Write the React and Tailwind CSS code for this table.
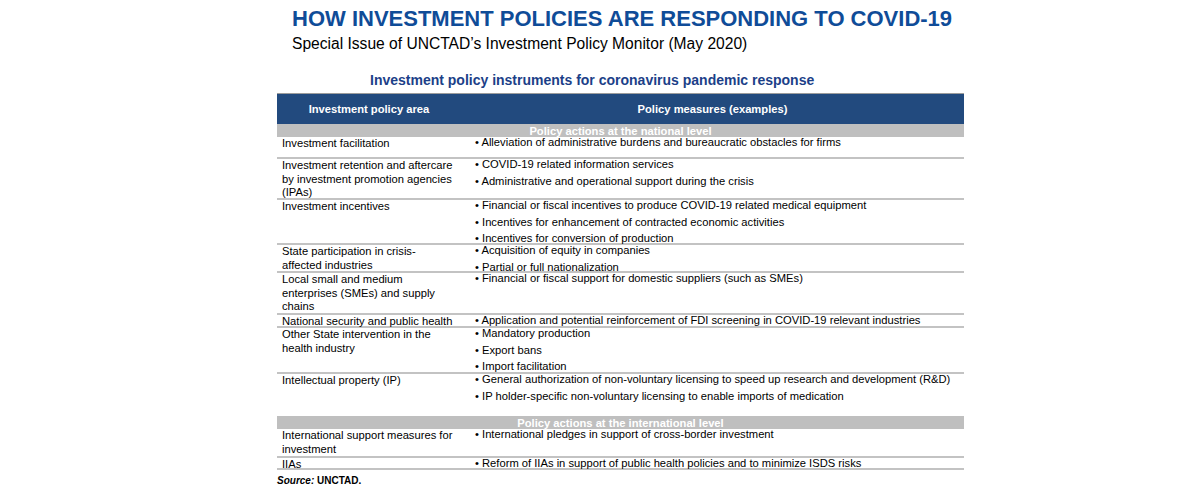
import React from 'react';

const national = [
  { area: ['Investment facilitation'], items: ['Alleviation of administrative burdens and bureaucratic obstacles for firms'], h: 'h-[22px]' },
  { area: ['Investment retention and aftercare', 'by investment promotion agencies', '(IPAs)'], items: ['COVID-19 related information services', 'Administrative and operational support during the crisis'], h: 'h-[41px]' },
  { area: ['Investment incentives'], items: ['Financial or fiscal incentives to produce COVID-19 related medical equipment', 'Incentives for enhancement of contracted economic activities', 'Incentives for conversion of production'], h: 'h-[45px]' },
  { area: ['State participation in crisis-', 'affected industries'], items: ['Acquisition of equity in companies', 'Partial or full nationalization'], h: 'h-[28px]' },
  { area: ['Local small and medium', 'enterprises (SMEs) and supply', 'chains'], items: ['Financial or fiscal support for domestic suppliers (such as SMEs)'], h: 'h-[42px]' },
  { area: ['National security and public health'], items: ['Application and potential reinforcement of FDI screening in COVID-19 relevant industries'], h: 'h-[13px]' },
  { area: ['Other State intervention in the', 'health industry'], items: ['Mandatory production', 'Export bans', 'Import facilitation'], h: 'h-[46px]' },
  { area: ['Intellectual property (IP)'], items: ['General authorization of non-voluntary licensing to speed up research and development (R&D)', 'IP holder-specific non-voluntary licensing to enable imports of medication'], h: 'h-[42px]', last: true },
];

const international = [
  { area: ['International support measures for', 'investment'], items: ['International pledges in support of cross-border investment'], h: 'h-[29px]' },
  { area: ['IIAs'], items: ['Reform of IIAs in support of public health policies and to minimize ISDS risks'], h: 'h-[12px]' },
];

function Row({ row }) {
  return (
    <div className={`flex ${row.h} ${row.last ? '' : 'border-b-2 border-[#c3c3c3]'}`}>
      <div className="w-[184px] pl-[5px] leading-[13.5px]">
        {row.area.map((line, i) => (
          <div key={i} className="whitespace-nowrap">{line}</div>
        ))}
      </div>
      <div className="flex-1 pl-[14px] -mt-[1px] flex flex-col gap-[3px] leading-[13.5px]">
        {row.items.map((item, i) => (
          <div key={i} className="whitespace-nowrap">• {item}</div>
        ))}
      </div>
    </div>
  );
}

function Band({ label }) {
  return (
    <div className="h-[13px] bg-[#bfbfbf] flex items-center justify-center text-white font-bold leading-[12px]">
      {label}
    </div>
  );
}

export default function App() {
  return (
    <div className="w-[1200px] h-[497px] bg-white overflow-hidden font-['Liberation_Sans',Arial,sans-serif] text-black">
      <div className="ml-[277px] w-[687px]">
        <div className="pl-[15px] pt-[8px]">
          <h1 className="text-[22px] leading-[22px] font-bold text-[#0f4c98] whitespace-nowrap">
            HOW INVESTMENT POLICIES ARE RESPONDING TO COVID-19
          </h1>
          <p className="mt-[5px] text-[15.6px] leading-[18px] whitespace-nowrap">
            Special Issue of UNCTAD’s Investment Policy Monitor (May 2020)
          </p>
        </div>
        <h2 className="mt-[19px] pl-[93px] text-[14px] leading-[16px] font-bold text-[#1c3f88] whitespace-nowrap">
          Investment policy instruments for coronavirus pandemic response
        </h2>
        <div className="mt-[5px] text-[11.2px]">
          <div className="flex h-[31px] bg-[#224a7e] border-t border-[#9c9c9c] text-white font-bold items-center">
            <div className="w-[184px] text-center">Investment policy area</div>
            <div className="flex-1 text-center">Policy measures (examples)</div>
          </div>
          <Band label="Policy actions at the national level" />
          {national.map((row, i) => (
            <Row key={i} row={row} />
          ))}
          <Band label="Policy actions at the international level" />
          {international.map((row, i) => (
            <Row key={i} row={row} />
          ))}
          <div className="mt-[5px] text-[10px] leading-[12px] font-bold">
            <span className="italic">Source:</span> UNCTAD.
          </div>
        </div>
      </div>
    </div>
  );
}
